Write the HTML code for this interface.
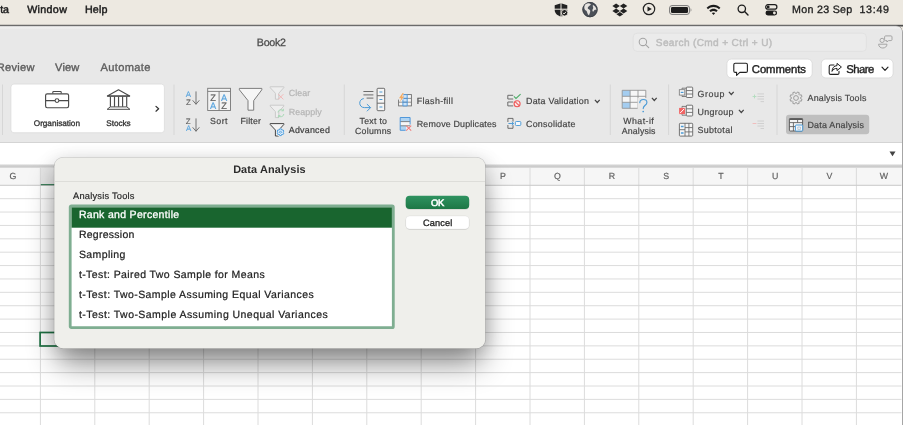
<!DOCTYPE html>
<html><head><meta charset="utf-8"><title>Data Analysis</title>
<style>
html,body{margin:0;padding:0;}
body{width:903px;height:425px;overflow:hidden;position:relative;background:#fff;font-family:"Liberation Sans",sans-serif;}
.t{position:absolute;white-space:nowrap;line-height:1;}
.r{position:absolute;display:block;}
</style></head><body>
<div class="r" style="left:0.00px;top:0.00px;width:903.00px;height:40.00px;background:linear-gradient(#ede9e1 0px,#ede9e1 24.3px,#8a8886 24.9px,#4c4c4c 25.5px,#585858 26px,#9a9896 26.5px,#ede9e1 27.5px);"></div>
<div class="r" style="left:901.00px;top:30.00px;width:2.00px;height:395.00px;background:#d0d0d0;"></div>
<div class="r" style="left:-10.00px;top:26.00px;width:911.70px;height:414.00px;background:linear-gradient(#bdbdbd 0px,#d4d4d4 0.4px,#efefef 1px,#eeeeee 2.2px,#e8e8e8 3.4px);border-radius:6px 6px 0 0;box-shadow:0 0 0 0.6px #8a8a8a;"></div>
<div class="r" style="left:0.00px;top:142.00px;width:901.50px;height:283.00px;background:#fff;"></div>
<div class="r" style="left:0.00px;top:141.50px;width:901.50px;height:0.80px;background:#d4d4d4;"></div>
<div class="r" style="left:0.00px;top:164.30px;width:901.50px;height:3.50px;background:linear-gradient(#f4f4f4,#c6c6c6 50%,#dedede);"></div>
<div class="r" style="left:0.00px;top:167.80px;width:901.50px;height:17.70px;background:#f6f6f6;"></div>
<div class="r" style="left:40.40px;top:167.80px;width:54.40px;height:17.70px;background:#e6e6e6;"></div>
<svg class="r" style="left:38px;top:182px;" width="59" height="6"><rect x="2.00" y="2.00" width="54.80" height="1.90" rx="0" fill="#1f7244"/></svg>
<svg class="r" style="left:0.00px;top:0.00px;" width="903" height="425" viewBox="0 0 903 425"><line x1="40.40" y1="168" x2="40.40" y2="185.5" stroke="#d8d8d8" stroke-width="0.9"/><line x1="40.40" y1="185.5" x2="40.40" y2="425" stroke="#dcdcdc" stroke-width="1"/><line x1="94.80" y1="168" x2="94.80" y2="185.5" stroke="#d8d8d8" stroke-width="0.9"/><line x1="94.80" y1="185.5" x2="94.80" y2="425" stroke="#dcdcdc" stroke-width="1"/><line x1="149.20" y1="168" x2="149.20" y2="185.5" stroke="#d8d8d8" stroke-width="0.9"/><line x1="149.20" y1="185.5" x2="149.20" y2="425" stroke="#dcdcdc" stroke-width="1"/><line x1="203.60" y1="168" x2="203.60" y2="185.5" stroke="#d8d8d8" stroke-width="0.9"/><line x1="203.60" y1="185.5" x2="203.60" y2="425" stroke="#dcdcdc" stroke-width="1"/><line x1="258.00" y1="168" x2="258.00" y2="185.5" stroke="#d8d8d8" stroke-width="0.9"/><line x1="258.00" y1="185.5" x2="258.00" y2="425" stroke="#dcdcdc" stroke-width="1"/><line x1="312.40" y1="168" x2="312.40" y2="185.5" stroke="#d8d8d8" stroke-width="0.9"/><line x1="312.40" y1="185.5" x2="312.40" y2="425" stroke="#dcdcdc" stroke-width="1"/><line x1="366.80" y1="168" x2="366.80" y2="185.5" stroke="#d8d8d8" stroke-width="0.9"/><line x1="366.80" y1="185.5" x2="366.80" y2="425" stroke="#dcdcdc" stroke-width="1"/><line x1="421.20" y1="168" x2="421.20" y2="185.5" stroke="#d8d8d8" stroke-width="0.9"/><line x1="421.20" y1="185.5" x2="421.20" y2="425" stroke="#dcdcdc" stroke-width="1"/><line x1="475.60" y1="168" x2="475.60" y2="185.5" stroke="#d8d8d8" stroke-width="0.9"/><line x1="475.60" y1="185.5" x2="475.60" y2="425" stroke="#dcdcdc" stroke-width="1"/><line x1="530.00" y1="168" x2="530.00" y2="185.5" stroke="#d8d8d8" stroke-width="0.9"/><line x1="530.00" y1="185.5" x2="530.00" y2="425" stroke="#dcdcdc" stroke-width="1"/><line x1="584.40" y1="168" x2="584.40" y2="185.5" stroke="#d8d8d8" stroke-width="0.9"/><line x1="584.40" y1="185.5" x2="584.40" y2="425" stroke="#dcdcdc" stroke-width="1"/><line x1="638.80" y1="168" x2="638.80" y2="185.5" stroke="#d8d8d8" stroke-width="0.9"/><line x1="638.80" y1="185.5" x2="638.80" y2="425" stroke="#dcdcdc" stroke-width="1"/><line x1="693.20" y1="168" x2="693.20" y2="185.5" stroke="#d8d8d8" stroke-width="0.9"/><line x1="693.20" y1="185.5" x2="693.20" y2="425" stroke="#dcdcdc" stroke-width="1"/><line x1="747.60" y1="168" x2="747.60" y2="185.5" stroke="#d8d8d8" stroke-width="0.9"/><line x1="747.60" y1="185.5" x2="747.60" y2="425" stroke="#dcdcdc" stroke-width="1"/><line x1="802.00" y1="168" x2="802.00" y2="185.5" stroke="#d8d8d8" stroke-width="0.9"/><line x1="802.00" y1="185.5" x2="802.00" y2="425" stroke="#dcdcdc" stroke-width="1"/><line x1="856.40" y1="168" x2="856.40" y2="185.5" stroke="#d8d8d8" stroke-width="0.9"/><line x1="856.40" y1="185.5" x2="856.40" y2="425" stroke="#dcdcdc" stroke-width="1"/><line x1="910.80" y1="168" x2="910.80" y2="185.5" stroke="#d8d8d8" stroke-width="0.9"/><line x1="910.80" y1="185.5" x2="910.80" y2="425" stroke="#dcdcdc" stroke-width="1"/><line x1="0" y1="185.30" x2="901.5" y2="185.30" stroke="#c8c8c8" stroke-width="1"/><line x1="0" y1="198.68" x2="901.5" y2="198.68" stroke="#dcdcdc" stroke-width="1"/><line x1="0" y1="212.06" x2="901.5" y2="212.06" stroke="#dcdcdc" stroke-width="1"/><line x1="0" y1="225.44" x2="901.5" y2="225.44" stroke="#dcdcdc" stroke-width="1"/><line x1="0" y1="238.82" x2="901.5" y2="238.82" stroke="#dcdcdc" stroke-width="1"/><line x1="0" y1="252.20" x2="901.5" y2="252.20" stroke="#dcdcdc" stroke-width="1"/><line x1="0" y1="265.58" x2="901.5" y2="265.58" stroke="#dcdcdc" stroke-width="1"/><line x1="0" y1="278.96" x2="901.5" y2="278.96" stroke="#dcdcdc" stroke-width="1"/><line x1="0" y1="292.34" x2="901.5" y2="292.34" stroke="#dcdcdc" stroke-width="1"/><line x1="0" y1="305.72" x2="901.5" y2="305.72" stroke="#dcdcdc" stroke-width="1"/><line x1="0" y1="319.10" x2="901.5" y2="319.10" stroke="#dcdcdc" stroke-width="1"/><line x1="0" y1="332.48" x2="901.5" y2="332.48" stroke="#dcdcdc" stroke-width="1"/><line x1="0" y1="345.86" x2="901.5" y2="345.86" stroke="#dcdcdc" stroke-width="1"/><line x1="0" y1="359.24" x2="901.5" y2="359.24" stroke="#dcdcdc" stroke-width="1"/><line x1="0" y1="372.62" x2="901.5" y2="372.62" stroke="#dcdcdc" stroke-width="1"/><line x1="0" y1="386.00" x2="901.5" y2="386.00" stroke="#dcdcdc" stroke-width="1"/><line x1="0" y1="399.38" x2="901.5" y2="399.38" stroke="#dcdcdc" stroke-width="1"/><line x1="0" y1="412.76" x2="901.5" y2="412.76" stroke="#dcdcdc" stroke-width="1"/><line x1="0" y1="426.14" x2="901.5" y2="426.14" stroke="#dcdcdc" stroke-width="1"/><rect x="40.1" y="332.5" width="54.7" height="13.5" fill="none" stroke="#1f7244" stroke-width="1.7"/></svg>
<svg class="r" style="left:553.00px;top:2.00px;" width="16" height="16" viewBox="0 0 16 16"><path d="M8 1.2 L14.3 3.2 V8 C14.3 11.4 11.6 13.6 8 14.6 C4.4 13.6 1.7 11.4 1.7 8 V3.2 Z" fill="#222"/><path d="M8 1 V15 M1 7.2 H15" stroke="#ede9e1" stroke-width="1"/><circle cx="11.6" cy="10.8" r="3.3" fill="#222" stroke="#ede9e1" stroke-width="0.9"/><path d="M10 10.8 l1.1 1.2 l2-2.3" stroke="#ede9e1" stroke-width="0.95" fill="none"/></svg>
<svg class="r" style="left:581.00px;top:1.00px;" width="18" height="18" viewBox="0 0 18 18"><circle cx="9" cy="8.6" r="7.6" fill="#4b5058"/><circle cx="9" cy="8.6" r="7.2" fill="none" stroke="#3a3e44" stroke-width="0.8"/><path d="M4.2 3.4 C6.4 2 8.6 2.2 9.6 3 C10.4 3.8 8 5 7 6.2 C6 7.4 7.6 8 8.6 8.8 C10 9.8 9 12 8 14.2 C6 13.4 6.6 10.6 5 9.6 C3.4 8.6 2.6 6 4.2 3.4 Z M12 4 C13.6 4.6 15.2 6.4 15.4 8.8 C14.4 8.4 13.2 8.8 12.8 10 C12.4 11 11.4 10.4 11.4 9.4 C11.4 8 12.4 7.6 12.2 6.4 C12 5.4 11.4 5 12 4 Z" fill="#e6e3df"/></svg>
<svg class="r" style="left:612.00px;top:3.00px;" width="17" height="15" viewBox="0 0 17 15"><g transform="scale(0.98,1.0)"><path d="M4.2 0.5 L8 3 L4.2 5.5 L0.4 3 Z M11.8 0.5 L15.6 3 L11.8 5.5 L8 3 Z M4.2 5.6 L8 8.1 L4.2 10.6 L0.4 8.1 Z M11.8 5.6 L15.6 8.1 L11.8 10.6 L8 8.1 Z M8 8.9 L11.5 11.2 L8 13.5 L4.5 11.2 Z" fill="#222"/></g></svg>
<svg class="r" style="left:641.60px;top:2.00px;" width="14" height="14" viewBox="0 0 14 14"><circle cx="7" cy="7" r="5.7" fill="none" stroke="#222" stroke-width="1.2"/><path d="M5.5 4.4 L9.8 7 L5.5 9.6 Z" fill="#222"/></svg>
<svg class="r" style="left:669.00px;top:4.50px;" width="24" height="10" viewBox="0 0 24 10"><rect x="0.6" y="0.6" width="19.8" height="8.8" rx="2.4" fill="none" stroke="#777" stroke-width="1"/><rect x="2" y="2" width="17" height="6" rx="1.3" fill="#1c1c1c"/><path d="M21.6 3.3 C22.6 3.6 22.6 6.4 21.6 6.7 Z" fill="#777"/></svg>
<svg class="r" style="left:706.00px;top:3.60px;" width="15" height="11" viewBox="0 0 15 11"><path d="M0.6 3.7 C4.4 -0.2 10.6 -0.2 14.4 3.7 L13 5.2 C10 2.2 5 2.2 2 5.2 Z M3.3 6.5 C5.7 4.2 9.3 4.2 11.7 6.5 L10.3 8 C8.7 6.5 6.3 6.5 4.7 8 Z M7.5 10.9 L5.8 9.1 C6.7 8.2 8.3 8.2 9.2 9.1 Z" fill="#1c1c1c"/></svg>
<svg class="r" style="left:737.00px;top:3.50px;" width="12" height="12" viewBox="0 0 12 12"><circle cx="4.8" cy="4.8" r="3.7" fill="none" stroke="#1c1c1c" stroke-width="1.3"/><path d="M7.6 7.6 L11 11" stroke="#1c1c1c" stroke-width="1.4" stroke-linecap="round"/></svg>
<svg class="r" style="left:764.60px;top:3.50px;" width="13" height="12" viewBox="0 0 13 12"><rect x="0.7" y="0.7" width="11.2" height="4.4" rx="2.2" fill="none" stroke="#1c1c1c" stroke-width="1.2"/><circle cx="3.2" cy="2.9" r="1.4" fill="#1c1c1c"/><rect x="0.5" y="6.6" width="11.6" height="4.8" rx="2.4" fill="#1c1c1c"/><circle cx="9.4" cy="9" r="1.4" fill="#ede9e1"/></svg>
<svg class="r" style="left:631px;top:31px;" width="238" height="23"><rect x="2.20" y="2.20" width="233.20" height="18.20" rx="4" fill="#ebebeb" stroke="#dedede" stroke-width="0.8"/></svg>
<svg class="r" style="left:637.60px;top:36.60px;" width="12" height="12" viewBox="0 0 12 12"><circle cx="4.9" cy="4.9" r="3.7" fill="none" stroke="#a4a4a4" stroke-width="1.05"/><path d="M7.6 7.6 L10.7 10.7" stroke="#a4a4a4" stroke-width="1.15" stroke-linecap="round"/></svg>
<svg class="r" style="left:876.00px;top:33.00px;" width="18" height="18" viewBox="0 0 18 18"><g transform="translate(-876,-33)" fill="none" stroke="#a2a2a2" stroke-width="0.95" stroke-linejoin="round"><circle cx="882.1" cy="40.4" r="2.1"/><path d="M878.6 44.2 H887 C887 49.3 878.6 49.3 878.6 44.2 Z"/><path d="M885.6 35.9 H891 C891.6 35.9 892 36.3 892 36.9 V39.6 C892 40.2 891.6 40.6 891 40.6 H888.6 L886.9 42 V40.6 H885.6 C885 40.6 884.6 40.2 884.6 39.6 V36.9 C884.6 36.3 885 35.9 885.6 35.9 Z" fill="#e9e9e9"/></g></svg>
<svg class="r" style="left:724px;top:57px;" width="91" height="23"><rect x="2.90" y="2.10" width="85.30" height="18.80" rx="4.5" fill="#fff" stroke="#d4d4d4" stroke-width="0.7"/></svg>
<svg class="r" style="left:819px;top:57px;" width="77" height="23"><rect x="2.30" y="2.10" width="71.80" height="18.80" rx="4.5" fill="#fff" stroke="#d4d4d4" stroke-width="0.7"/></svg>
<svg class="r" style="left:733.00px;top:62.00px;" width="16" height="15" viewBox="0 0 16 15"><path d="M2.2 1.3 H13 C13.8 1.3 14.4 1.9 14.4 2.7 V9 C14.4 9.8 13.8 10.4 13 10.4 H6.8 L3.6 13.4 V10.4 H2.2 C1.4 10.4 0.8 9.8 0.8 9 V2.7 C0.8 1.9 1.4 1.3 2.2 1.3 Z" fill="none" stroke="#222" stroke-width="1.1" stroke-linejoin="round"/></svg>
<svg class="r" style="left:828.00px;top:62.00px;" width="15" height="14" viewBox="0 0 15 14"><path d="M6 3 H2.6 C1.8 3 1.2 3.6 1.2 4.4 V11 C1.2 11.8 1.8 12.4 2.6 12.4 H9.6 C10.4 12.4 11 11.8 11 11 V9.4" fill="none" stroke="#222" stroke-width="1.1" stroke-linecap="round"/><path d="M9 1.4 L13.4 5 L9 8.6 V6.4 C6.6 6.4 5 7.4 4 9.4 C4.2 6 6 3.8 9 3.6 Z" fill="none" stroke="#222" stroke-width="1" stroke-linejoin="round"/></svg>
<svg class="r" style="left:881.00px;top:66.30px;" width="8" height="6" viewBox="0 0 8 6"><path d="M1 1.2 L4 4.4 L7 1.2" fill="none" stroke="#222" stroke-width="1.2" stroke-linecap="round" stroke-linejoin="round"/></svg>
<svg class="r" style="left:0px;top:82px;" width="5" height="55"><rect x="2.00" y="2.50" width="1.00" height="50.50" rx="0" fill="#d6d6d6"/></svg>
<svg class="r" style="left:171px;top:82px;" width="6" height="55"><rect x="2.50" y="2.50" width="1.00" height="50.50" rx="0" fill="#d6d6d6"/></svg>
<svg class="r" style="left:341px;top:82px;" width="6" height="55"><rect x="2.80" y="2.50" width="1.00" height="50.50" rx="0" fill="#d6d6d6"/></svg>
<svg class="r" style="left:607px;top:82px;" width="6" height="55"><rect x="2.80" y="2.50" width="1.00" height="50.50" rx="0" fill="#d6d6d6"/></svg>
<svg class="r" style="left:666px;top:82px;" width="6" height="55"><rect x="2.10" y="2.50" width="1.00" height="50.50" rx="0" fill="#d6d6d6"/></svg>
<svg class="r" style="left:774px;top:82px;" width="6" height="55"><rect x="2.50" y="2.50" width="1.00" height="50.50" rx="0" fill="#d6d6d6"/></svg>
<svg class="r" style="left:8px;top:82px;" width="159" height="53"><rect x="2.90" y="2.10" width="153.50" height="48.60" rx="3" fill="#fff" stroke="#d9d9d9" stroke-width="0.7"/></svg>
<svg class="r" style="left:44.00px;top:90.00px;" width="26" height="20" viewBox="0 0 26 20"><rect x="1.6" y="3.8" width="23" height="13.9" rx="1.6" fill="none" stroke="#4a4a4a" stroke-width="1.15"/><path d="M8.8 3.6 V2.2 C8.8 1.8 9.1 1.5 9.5 1.5 H16.5 C16.9 1.5 17.2 1.8 17.2 2.2 V3.6" fill="none" stroke="#4a4a4a" stroke-width="1.1"/><path d="M1.6 10.6 H11 M15 10.6 H24.6" stroke="#4a4a4a" stroke-width="1.1"/><circle cx="13" cy="10.6" r="1.9" fill="none" stroke="#4a4a4a" stroke-width="1.1"/></svg>
<svg class="r" style="left:104.00px;top:86.00px;" width="30" height="26" viewBox="0 0 30 26"><g transform="translate(-104,-86)" fill="none" stroke="#4a4a4a" stroke-linejoin="round"><path d="M107.4 96 L118.5 89.7 L129.7 96 Z" stroke-width="1.1"/><path d="M107.2 96.1 H129.9" stroke-width="1.25"/><path d="M110.4 96.5 V106.8 M114.5 96.5 V106.8 M118.55 96.5 V106.8 M122.6 96.5 V106.8 M126.7 96.5 V106.8" stroke-width="1.15"/><path d="M110.2 106.9 H126.9 L129.9 109.3 H107.2 Z" stroke-width="1"/></g></svg>
<svg class="r" style="left:155.00px;top:105.00px;" width="5" height="7" viewBox="0 0 5 7"><path d="M1 1.4 L3.6 3.8 L1 6.2" fill="none" stroke="#333" stroke-width="1.25" stroke-linecap="round" stroke-linejoin="round"/></svg>
<svg class="r" style="left:191.90px;top:91.00px;" width="8" height="15" viewBox="0 0 8 15"><path d="M4 0.8 V13 M0.9 9.6 L4 13.2 L7.1 9.6" fill="none" stroke="#666" stroke-width="0.9" stroke-linecap="round" stroke-linejoin="round"/></svg>
<svg class="r" style="left:191.90px;top:117.80px;" width="8" height="15" viewBox="0 0 8 15"><path d="M4 0.8 V13 M0.9 9.6 L4 13.2 L7.1 9.6" fill="none" stroke="#666" stroke-width="0.9" stroke-linecap="round" stroke-linejoin="round"/></svg>
<svg class="r" style="left:205.00px;top:86.00px;" width="28" height="27" viewBox="0 0 28 27"><g transform="translate(-205,-86)"><rect x="207.7" y="88.3" width="22.8" height="22.2" fill="#f3f3f3" stroke="#777" stroke-width="0.9"/><path d="M207.7 91.4 H230.5 M219.1 91.4 V110.5" stroke="#777" stroke-width="0.9"/></g></svg>
<svg class="r" style="left:237.00px;top:86.00px;" width="28" height="27" viewBox="0 0 28 27"><g transform="translate(-237,-86)"><path d="M239.4 88.4 H261.8 V89.8 L253.7 100.6 V110.2 H248 V100.6 L239.4 89.8 Z" fill="#f6f6f6" stroke="#777" stroke-width="0.95" stroke-linejoin="round"/></g></svg>
<svg class="r" style="left:268.00px;top:84.00px;" width="20" height="20" viewBox="0 0 20 20"><g transform="translate(-268,-84)"><path d="M270.2 86.8 H283.8 V87.7 L278.8 93.2 V99.2 H275.4 V93.2 L270.2 87.7 Z" fill="#eeeeee" stroke="#c8c8c8" stroke-width="0.95" stroke-linejoin="round"/><path d="M278.2 94.2 L283.4 99.4 M283.4 94.2 L278.2 99.4" stroke="#f2b6b6" stroke-width="0.95" fill="none"/></g></svg>
<svg class="r" style="left:268.00px;top:102.00px;" width="20" height="20" viewBox="0 0 20 20"><g transform="translate(-268,-102)"><path d="M270.2 105.2 H283.8 V106.10000000000001 L278.8 111.60000000000001 V117.60000000000001 H275.4 V111.60000000000001 L270.2 106.10000000000001 Z" fill="#eeeeee" stroke="#c8c8c8" stroke-width="0.95" stroke-linejoin="round"/><path d="M278 112.4 A3 3 0 0 1 283.2 110.6 M283.8 114 A3 3 0 0 1 278.6 115.8 M283.4 108.8 V110.8 H281.4 M278.4 117.6 V115.6 H280.4" fill="none" stroke="#a6d8b4" stroke-width="0.95"/></g></svg>
<svg class="r" style="left:268.00px;top:120.00px;" width="20" height="20" viewBox="0 0 20 20"><g transform="translate(-268,-120)"><path d="M270.2 123.6 H283.8 V124.5 L278.8 130.0 V136.0 H275.4 V130.0 L270.2 124.5 Z" fill="#f4f4f4" stroke="#3c3c3c" stroke-width="0.95" stroke-linejoin="round"/><circle cx="280.5" cy="132.2" r="4.3" fill="#e8e8e8"/><path d="M283.85 133.22 L283.06 134.59 L282.04 134.17 L281.44 134.52 L281.29 135.61 L279.71 135.61 L279.56 134.52 L278.96 134.17 L277.94 134.59 L277.15 133.22 L278.02 132.55 L278.02 131.85 L277.15 131.18 L277.94 129.81 L278.96 130.23 L279.56 129.88 L279.71 128.79 L281.29 128.79 L281.44 129.88 L282.04 130.23 L283.06 129.81 L283.85 131.18 L282.98 131.85 L282.98 132.55 Z" fill="#eef5fc" stroke="#3d96dc" stroke-width="0.9" stroke-linejoin="round"/><circle cx="280.5" cy="132.2" r="1" fill="none" stroke="#3d96dc" stroke-width="0.8"/></g></svg>
<svg class="r" style="left:357.00px;top:86.00px;" width="31" height="28" viewBox="0 0 31 28"><path d="M6.4 5.5 H16.4 M6.4 8.9 H16.4 M9.6 12.1 H16.4" stroke="#666" stroke-width="0.95"/><rect x="20.1" y="2.3" width="7.6" height="22.4" rx="0.8" fill="#f6f6f6" stroke="#666" stroke-width="0.95"/><path d="M20.1 9.7 H27.7 M20.1 17.2 H27.7" stroke="#666" stroke-width="0.95"/><path d="M22.4 6 H25.4 M22.4 13.5 H25.4 M22.4 21 H25.4" stroke="#4a9ad6" stroke-width="1"/><path d="M6.4 12.6 C1.2 13.2 1.4 21.6 7.4 21.6 H13.2 M10.2 18.4 L13.6 21.6 L10.2 25" fill="none" stroke="#4a9ad6" stroke-width="1" stroke-linecap="round" stroke-linejoin="round"/></svg>
<svg class="r" style="left:396.00px;top:90.00px;" width="18" height="18" viewBox="0 0 18 18"><g transform="translate(-396,-90)"><rect x="398.6" y="94.6" width="12.8" height="11.3" fill="#f4f4f4" stroke="#6e6e6e" stroke-width="0.9"/><rect x="402.9" y="94.6" width="4.3" height="11.3" fill="#cfe4f7"/><path d="M398.6 98.4 H411.4 M398.6 102.2 H411.4" stroke="#7a7a7a" stroke-width="0.8"/><path d="M402.9 94.6 V105.9 M407.2 94.6 V105.9" stroke="#4a94d8" stroke-width="0.9"/><path d="M402.9 98.4 H407.2 M402.9 102.2 H407.2 M402.9 94.6 H407.2 M402.9 105.9 H407.2" stroke="#4a94d8" stroke-width="0.9"/><path d="M397.6 93.4 H403.4 V99.6 H397.6 Z" fill="#e8e8e8"/><path d="M402.6 93 L399 98.2 H401.2 L399.8 102 L404.2 96.4 H401.8 L403.8 93 Z" fill="#f4aa60"/></g></svg>
<svg class="r" style="left:398.00px;top:115.00px;" width="16" height="18" viewBox="0 0 16 18"><g transform="translate(-398,-115)"><rect x="400.2" y="117.5" width="9.9" height="12.8" fill="#f6f6f6"/><rect x="400.2" y="117.5" width="9.9" height="4.1" fill="#b0d4f2"/><rect x="400.2" y="125.8" width="6" height="4.5" fill="#b0d4f2"/><path d="M400.2 121.6 H410.1 M400.2 125.8 H410.1" stroke="#707070" stroke-width="0.85"/><path d="M410.1 124.5 V117.5 H400.2 V130.3 H405.6" fill="none" stroke="#4a94d8" stroke-width="0.95"/><path d="M406.2 125.6 L411.2 130.6 M411.2 125.6 L406.2 130.6" stroke="#f07c7c" stroke-width="1.05"/></g></svg>
<svg class="r" style="left:504.00px;top:90.00px;" width="20" height="20" viewBox="0 0 20 20"><g transform="translate(-504,-90)" fill="none"><path d="M513.2 95.3 H507.8 V99 H513.2 M513.2 102 H507.8 V105.9 H513.2" stroke="#666" stroke-width="0.95"/><path d="M513.9 96.4 L516 98.5 L520.6 94.2" stroke="#4cad68" stroke-width="1.1"/><circle cx="517.1" cy="103.7" r="3" fill="#fbeaea" stroke="#ee5a5a" stroke-width="1.1"/><path d="M515 101.7 L519.2 105.7" stroke="#ee5a5a" stroke-width="1.1"/></g></svg>
<svg class="r" style="left:593.50px;top:98.50px;" width="7" height="5" viewBox="0 0 7 5"><path d="M0.9 0.9 L3.3 3.5 L5.7 0.9" fill="none" stroke="#444" stroke-width="1.2"/></svg>
<svg class="r" style="left:504.00px;top:114.00px;" width="20" height="20" viewBox="0 0 20 20"><g transform="translate(-504,-114)" fill="none"><path d="M507.9 122 V118.4 H513 V121.6 M507.9 125 V128.3 H513 V125.2" stroke="#666" stroke-width="0.95"/><path d="M508.4 123.5 H513.6 M511.8 121.8 L513.7 123.5 L511.8 125.2" stroke="#4a9ad6" stroke-width="0.95"/><rect x="515.4" y="121.5" width="5.4" height="4" rx="0.9" fill="#f4f8fc" stroke="#4a9ad6" stroke-width="0.95"/></g></svg>
<svg class="r" style="left:620.00px;top:88.00px;" width="30" height="27" viewBox="0 0 30 27"><g transform="translate(-620,-88)"><rect x="622.2" y="90.3" width="23.6" height="18" fill="#f6f6f6"/><rect x="622.2" y="90.3" width="7.9" height="6" fill="#a4cdf0"/><rect x="622.2" y="102.3" width="7.9" height="6" fill="#a4cdf0"/><path d="M622.2 90.3 H645.8 V108.3 H622.2 Z M622.2 96.3 H645.8 M622.2 102.3 H645.8 M630.1 90.3 V108.3 M638 90.3 V108.3" fill="none" stroke="#909090" stroke-width="0.85"/><rect x="637.6" y="98" width="12" height="16" fill="#e8e8e8"/><path d="M639.8 102.6 C640 98.4 646.9 98.6 646.9 102.4 C646.9 105.2 643.2 105.4 643.2 108.6" fill="none" stroke="#4a9ad6" stroke-width="1.15" stroke-linecap="round"/><circle cx="643.2" cy="111.5" r="0.85" fill="#4a9ad6"/></g></svg>
<svg class="r" style="left:651.00px;top:97.30px;" width="7" height="5" viewBox="0 0 7 5"><path d="M0.9 0.9 L3.3 3.5 L5.7 0.9" fill="none" stroke="#444" stroke-width="1.2"/></svg>
<svg class="r" style="left:676.00px;top:84.00px;" width="20" height="54" viewBox="0 0 20 54"><g transform="translate(-676,-84)" fill="none"><rect x="686.3" y="87.1" width="6.4" height="10.40" rx="0.8" fill="#f6f6f6" stroke="#666" stroke-width="0.9"/><path d="M686.3 90.57 H692.7 M686.3 94.03 H692.7" stroke="#666" stroke-width="0.85"/><path d="M682 89.4 V88.2 H686.3 M682 95.4 V96.5 H686.3" stroke="#666" stroke-width="0.8"/><rect x="679.3" y="89.7" width="5.5" height="5.4" fill="#f6f6f6" stroke="#777" stroke-width="0.8"/><path d="M680.7 92.4 H683.5" stroke="#4a9ad6" stroke-width="1.2"/><rect x="686.3" y="105.2" width="6.4" height="10.80" rx="0.8" fill="#f6f6f6" stroke="#666" stroke-width="0.9"/><path d="M686.3 108.80 H692.7 M686.3 112.40 H692.7" stroke="#666" stroke-width="0.85"/><path d="M682 107.8 V106.4 H686.3 M682 114.2 V115.2 H686.3" stroke="#666" stroke-width="0.8"/><rect x="679.1" y="107.9" width="6" height="6.2" fill="#f06464"/><path d="M680 113.2 L684.2 108.8" stroke="#fff" stroke-width="1"/><rect x="679.4" y="123.3" width="13.3" height="12.8" rx="0.8" fill="#f6f6f6" stroke="#666" stroke-width="0.9"/><path d="M679.4 129.7 H685 M685 127.6 H692.7 M685 131.9 H692.7 M685 123.3 V136.1 M688.9 123.3 V136.1" stroke="#666" stroke-width="0.85"/><path d="M680.9 126.5 H683.6 M680.9 133 H683.6" stroke="#4a9ad6" stroke-width="1.3"/></g></svg>
<svg class="r" style="left:727.70px;top:90.60px;" width="7" height="5" viewBox="0 0 7 5"><path d="M0.9 0.9 L3.3 3.5 L5.7 0.9" fill="none" stroke="#444" stroke-width="1.2"/></svg>
<svg class="r" style="left:738.20px;top:109.00px;" width="7" height="5" viewBox="0 0 7 5"><path d="M0.9 0.9 L3.3 3.5 L5.7 0.9" fill="none" stroke="#444" stroke-width="1.2"/></svg>
<svg class="r" style="left:750.00px;top:91.00px;" width="17" height="40" viewBox="0 0 17 40"><g transform="translate(-750,-91)" fill="none"><path d="M752.6 96.5 H756.4 M754.5 94.6 V98.4" stroke="#b0dcbc" stroke-width="0.9"/><path d="M757.4 93.9 H764 M757.4 96.5 H764 M757.4 99 H764 M760.6 101.6 H764" stroke="#cdcdcd" stroke-width="0.9"/><path d="M752.6 123.5 H756.4" stroke="#f2b8b8" stroke-width="0.9"/><path d="M757.4 121 H764 M757.4 123.5 H764 M757.4 126 H764 M760.6 128.5 H764" stroke="#cdcdcd" stroke-width="0.9"/></g></svg>
<svg class="r" style="left:788.90px;top:91.00px;" width="14" height="14" viewBox="0 0 14 14"><path d="M13.03 8.45 L12.29 10.24 L10.73 9.86 L9.86 10.73 L10.24 12.29 L8.45 13.03 L7.61 11.66 L6.39 11.66 L5.55 13.03 L3.76 12.29 L4.14 10.73 L3.27 9.86 L1.71 10.24 L0.97 8.45 L2.34 7.61 L2.34 6.39 L0.97 5.55 L1.71 3.76 L3.27 4.14 L4.14 3.27 L3.76 1.71 L5.55 0.97 L6.39 2.34 L7.61 2.34 L8.45 0.97 L10.24 1.71 L9.86 3.27 L10.73 4.14 L12.29 3.76 L13.03 5.55 L11.66 6.39 L11.66 7.61 Z" fill="none" stroke="#8c8c8c" stroke-width="0.8" stroke-linejoin="round"/><circle cx="7" cy="7" r="2.4" fill="none" stroke="#8c8c8c" stroke-width="0.8"/></svg>
<svg class="r" style="left:784px;top:112px;" width="88" height="25"><rect x="2.00" y="2.70" width="83.20" height="19.50" rx="3" fill="#bfbfbf"/></svg>
<svg class="r" style="left:787.00px;top:116.00px;" width="18" height="18" viewBox="0 0 18 18"><g transform="translate(-787,-116)"><rect x="789.4" y="118.6" width="13.2" height="12.4" rx="0.8" fill="#f4f4f4" stroke="#5a5a5a" stroke-width="0.95"/><path d="M789.4 119.2 H802.6" stroke="#5a5a5a" stroke-width="1.6"/><path d="M789.4 122.6 H802.6 M789.4 126.6 H795 M793.4 122.6 V131 M797.6 120 V122.6" stroke="#5a5a5a" stroke-width="0.85"/><rect x="795.4" y="125" width="7.3" height="6.1" rx="0.7" fill="#f4f8fc" stroke="#4a9ad6" stroke-width="1"/><path d="M797.8 127 V129.4 H800.4 V127 Z" fill="none" stroke="#9ab" stroke-width="0.6"/></g></svg>
<svg class="r" style="left:888.50px;top:150.80px;" width="7" height="6" viewBox="0 0 7 6"><path d="M0.5 0.4 H6.5 L3.5 5.2 Z" fill="#444"/></svg>
<div class="r" style="left:54.00px;top:157.00px;width:431.00px;height:191.00px;background:#efefeb;border-radius:9px;transform:translate(0.3px,0.4px);box-shadow:0 0 0 0.5px rgba(0,0,0,0.2),0 18px 30px -4px rgba(0,0,0,0.46),0 2px 18px rgba(0,0,0,0.13);"></div>
<svg class="r" style="left:52px;top:179px;" width="435" height="5"><rect x="2.50" y="2.10" width="430.50" height="0.80" rx="0" fill="#d9d9d5"/></svg>
<svg class="r" style="left:68px;top:204px;" width="328" height="126"><rect x="2.20" y="2.00" width="323.10" height="121.70" rx="1.2" fill="#fff" stroke="#7fae91" stroke-width="2.8"/></svg>
<svg class="r" style="left:69px;top:205px;" width="325" height="25"><rect x="2.60" y="2.40" width="320.30" height="20.30" rx="0" fill="#19652f"/></svg>
<svg class="r" style="left:400.00px;top:190.00px;" width="76" height="46" viewBox="0 0 76 46"><defs><linearGradient id="okg" x1="0" y1="0" x2="0" y2="1"><stop offset="0" stop-color="#2f9361"/><stop offset="1" stop-color="#1d7745"/></linearGradient></defs><g transform="translate(-400,-190)"><rect x="405.7" y="196.3" width="63.5" height="13.4" rx="4" fill="#000" fill-opacity="0.10"/><rect x="405.7" y="195.7" width="63.5" height="13.4" rx="4" fill="url(#okg)"/><rect x="405.5" y="216.4" width="63.9" height="13.3" rx="4.2" fill="#000" fill-opacity="0.10"/><rect x="405.7" y="215.9" width="63.5" height="13.2" rx="4" fill="#fff" stroke="#000" stroke-opacity="0.10" stroke-width="0.5"/></g></svg>
<svg class="r" style="left:0;top:0;will-change:transform" width="903" height="425" viewBox="0 0 903 425" font-family="Liberation Sans, sans-serif" text-rendering="geometricPrecision">
<text x="9.58" y="179.45" font-size="8.8" fill="#606060" letter-spacing="-0.000" stroke="#606060" stroke-width="0.18" >G</text>
<text x="500.07" y="179.45" font-size="8.8" fill="#606060" letter-spacing="0.000" stroke="#606060" stroke-width="0.18" >P</text>
<text x="554.08" y="179.45" font-size="8.8" fill="#606060" letter-spacing="0.000" stroke="#606060" stroke-width="0.18" >Q</text>
<text x="608.82" y="179.45" font-size="8.8" fill="#606060" letter-spacing="0.000" stroke="#606060" stroke-width="0.18" >R</text>
<text x="663.37" y="179.45" font-size="8.8" fill="#606060" letter-spacing="-0.000" stroke="#606060" stroke-width="0.18" >S</text>
<text x="718.31" y="179.45" font-size="8.8" fill="#606060" letter-spacing="0.000" stroke="#606060" stroke-width="0.18" >T</text>
<text x="772.12" y="179.45" font-size="8.8" fill="#606060" letter-spacing="0.000" stroke="#606060" stroke-width="0.18" >U</text>
<text x="826.57" y="179.45" font-size="8.8" fill="#606060" letter-spacing="-0.000" stroke="#606060" stroke-width="0.18" >V</text>
<text x="879.85" y="179.45" font-size="8.8" fill="#606060" letter-spacing="0.000" stroke="#606060" stroke-width="0.18" >W</text>
<text x="0.30" y="13.35" font-size="10.7" fill="#1c1c1c" letter-spacing="-0.223" stroke="#1c1c1c" stroke-width="0.45" >ta</text>
<text x="27.20" y="13.35" font-size="10.7" fill="#1c1c1c" letter-spacing="0.329" stroke="#1c1c1c" stroke-width="0.45" >Window</text>
<text x="85.00" y="13.35" font-size="10.7" fill="#1c1c1c" letter-spacing="0.131" stroke="#1c1c1c" stroke-width="0.45" >Help</text>
<text x="792.00" y="12.70" font-size="10.7" fill="#1c1c1c" letter-spacing="0.289" stroke="#1c1c1c" stroke-width="0.3" >Mon 23 Sep</text>
<text x="859.50" y="12.70" font-size="10.7" fill="#1c1c1c" letter-spacing="0.681" stroke="#1c1c1c" stroke-width="0.3" >13:49</text>
<text x="256.80" y="45.60" font-size="10.7" fill="#4a4a4a" letter-spacing="-0.285" stroke="#4a4a4a" stroke-width="0.25" >Book2</text>
<text x="655.80" y="46.10" font-size="10.1" fill="#bdbdbd" letter-spacing="0.346" stroke="#bdbdbd" stroke-width="0.45" >Search (Cmd + Ctrl + U)</text>
<text x="-3.20" y="70.90" font-size="11.1" fill="#5c5c5c" letter-spacing="0.241" stroke="#5c5c5c" stroke-width="0.35" >Review</text>
<text x="55.00" y="70.90" font-size="11.1" fill="#5c5c5c" letter-spacing="0.180" stroke="#5c5c5c" stroke-width="0.35" >View</text>
<text x="100.50" y="70.90" font-size="11.1" fill="#5c5c5c" letter-spacing="0.341" stroke="#5c5c5c" stroke-width="0.35" >Automate</text>
<text x="751.80" y="72.80" font-size="11.3" fill="#1e1e1e" letter-spacing="-0.061" stroke="#1e1e1e" stroke-width="0.4" >Comments</text>
<text x="846.30" y="72.80" font-size="11.3" fill="#1e1e1e" letter-spacing="-0.513" stroke="#1e1e1e" stroke-width="0.4" >Share</text>
<text x="33.80" y="125.70" font-size="8.2" fill="#303030" letter-spacing="-0.026" stroke="#303030" stroke-width="0.3" >Organisation</text>
<text x="106.25" y="125.70" font-size="8.2" fill="#303030" letter-spacing="-0.022" stroke="#303030" stroke-width="0.3" >Stocks</text>
<text x="185.70" y="96.90" font-size="7.9" fill="#5aa5de" letter-spacing="0.000" stroke="#5aa5de" stroke-width="0.1" >A</text>
<text x="186.00" y="104.50" font-size="7.9" fill="#606060" letter-spacing="0.000" stroke="#606060" stroke-width="0.1" >Z</text>
<text x="185.70" y="123.70" font-size="7.9" fill="#606060" letter-spacing="0.000" stroke="#606060" stroke-width="0.1" >Z</text>
<text x="186.00" y="131.30" font-size="7.9" fill="#5aa5de" letter-spacing="0.000" stroke="#5aa5de" stroke-width="0.1" >A</text>
<text x="210.30" y="100.60" font-size="9.3" fill="#606060" letter-spacing="0.000" stroke="#606060" stroke-width="0.18" >Z</text>
<text x="220.90" y="100.60" font-size="9.3" fill="#5aa5de" letter-spacing="0.000" stroke="#5aa5de" stroke-width="0.18" >A</text>
<text x="210.00" y="109.20" font-size="9.3" fill="#5aa5de" letter-spacing="0.000" stroke="#5aa5de" stroke-width="0.18" >A</text>
<text x="221.30" y="109.20" font-size="9.3" fill="#606060" letter-spacing="0.000" stroke="#606060" stroke-width="0.18" >Z</text>
<text x="210.00" y="124.45" font-size="8.8" fill="#444" letter-spacing="0.453" stroke="#444" stroke-width="0.18" >Sort</text>
<text x="240.50" y="124.45" font-size="8.8" fill="#444" letter-spacing="0.189" stroke="#444" stroke-width="0.18" >Filter</text>
<text x="288.75" y="95.90" font-size="8.9" fill="#b4b4b4" letter-spacing="0.058" stroke="#b4b4b4" stroke-width="0.2" >Clear</text>
<text x="288.75" y="114.55" font-size="8.9" fill="#b4b4b4" letter-spacing="0.058" stroke="#b4b4b4" stroke-width="0.2" >Reapply</text>
<text x="288.75" y="132.80" font-size="8.9" fill="#3c3c3c" letter-spacing="0.238" stroke="#3c3c3c" stroke-width="0.2" >Advanced</text>
<text x="359.50" y="124.45" font-size="8.8" fill="#444" letter-spacing="0.262" stroke="#444" stroke-width="0.18" >Text to</text>
<text x="355.00" y="134.45" font-size="8.8" fill="#444" letter-spacing="0.254" stroke="#444" stroke-width="0.18" >Columns</text>
<text x="416.75" y="104.00" font-size="8.9" fill="#444" letter-spacing="0.346" stroke="#444" stroke-width="0.18" >Flash-fill</text>
<text x="416.75" y="127.25" font-size="8.9" fill="#444" letter-spacing="0.177" stroke="#444" stroke-width="0.18" >Remove Duplicates</text>
<text x="526.00" y="104.00" font-size="8.9" fill="#444" letter-spacing="0.235" stroke="#444" stroke-width="0.18" >Data Validation</text>
<text x="526.00" y="127.25" font-size="8.9" fill="#444" letter-spacing="0.250" stroke="#444" stroke-width="0.18" >Consolidate</text>
<text x="623.25" y="124.45" font-size="8.8" fill="#444" letter-spacing="0.438" stroke="#444" stroke-width="0.18" >What-if</text>
<text x="621.75" y="134.40" font-size="8.8" fill="#444" letter-spacing="0.140" stroke="#444" stroke-width="0.18" >Analysis</text>
<text x="697.50" y="96.50" font-size="8.9" fill="#444" letter-spacing="0.566" stroke="#444" stroke-width="0.18" >Group</text>
<text x="697.50" y="115.00" font-size="8.9" fill="#444" letter-spacing="0.310" stroke="#444" stroke-width="0.18" >Ungroup</text>
<text x="697.50" y="133.25" font-size="8.9" fill="#444" letter-spacing="0.334" stroke="#444" stroke-width="0.18" >Subtotal</text>
<text x="807.50" y="101.00" font-size="8.9" fill="#444" letter-spacing="0.213" stroke="#444" stroke-width="0.18" >Analysis Tools</text>
<text x="807.50" y="128.00" font-size="8.9" fill="#444" letter-spacing="0.215" stroke="#444" stroke-width="0.18" >Data Analysis</text>
<text x="233.15" y="172.90" font-size="10.9" fill="#2c2c2c" letter-spacing="0.118" font-weight="bold" >Data Analysis</text>
<text x="73.00" y="199.25" font-size="9.3" fill="#262626" letter-spacing="0.211" stroke="#262626" stroke-width="0.18" >Analysis Tools</text>
<text x="78.90" y="218.10" font-size="10.5" fill="#fff" letter-spacing="0.316" stroke="#fff" stroke-width="0.3" >Rank and Percentile</text>
<text x="78.90" y="238.15" font-size="10.5" fill="#222" letter-spacing="0.265" stroke="#222" stroke-width="0.22" >Regression</text>
<text x="78.90" y="258.20" font-size="10.5" fill="#222" letter-spacing="0.389" stroke="#222" stroke-width="0.22" >Sampling</text>
<text x="78.90" y="278.25" font-size="10.5" fill="#222" letter-spacing="0.407" stroke="#222" stroke-width="0.22" >t-Test: Paired Two Sample for Means</text>
<text x="78.90" y="298.30" font-size="10.5" fill="#222" letter-spacing="0.431" stroke="#222" stroke-width="0.22" >t-Test: Two-Sample Assuming Equal Variances</text>
<text x="78.90" y="318.35" font-size="10.5" fill="#222" letter-spacing="0.451" stroke="#222" stroke-width="0.22" >t-Test: Two-Sample Assuming Unequal Variances</text>
<text x="431.00" y="205.85" font-size="9.4" fill="#fff" letter-spacing="-0.181" stroke="#fff" stroke-width="0.55" >OK</text>
<text x="423.00" y="225.75" font-size="9.2" fill="#222" letter-spacing="0.133" stroke="#222" stroke-width="0.3" >Cancel</text>
</svg>
</body></html>
